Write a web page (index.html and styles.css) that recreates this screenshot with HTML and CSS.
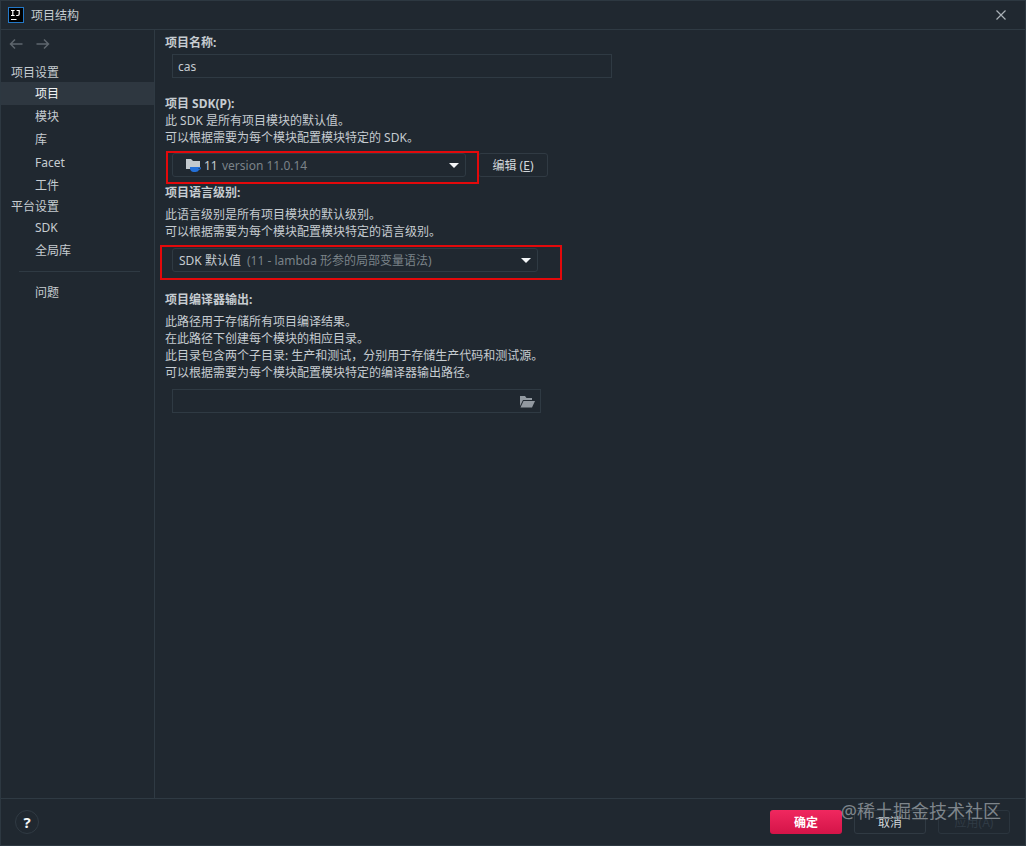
FILE: index.html
```html
<!DOCTYPE html>
<html lang="zh-CN">
<head>
<meta charset="utf-8">
<title>项目结构</title>
<link rel="stylesheet" href="styles.css">
</head>
<body>
<div class="window">
  <header class="titlebar">
    <svg class="app-icon" viewBox="0 0 16 16" aria-hidden="true">
      <rect x=".5" y=".5" width="15" height="15" fill="#000" stroke="#2378c8"/>
      <path d="M3 3.500h3.600M4.800 3.500v5M3 8.500h3.600M8.600 3.500h2.600v3.600q0 1.400-1.400 1.400H8.200M3 12.500h5.500" fill="none" stroke="#fff" stroke-width="1.200"/>
    </svg>
    <h1 class="title">项目结构</h1>
    <button class="close" type="button" aria-label="关闭">
      <svg viewBox="0 0 12 12"><path d="M1.500 1.500l9 9M10.500 1.500l-9 9" fill="none" stroke="#aab1b7" stroke-width="1.200"/></svg>
    </button>
  </header>

  <div class="body">
    <nav class="sidebar">
      <div class="history">
        <button type="button" aria-label="后退"><svg viewBox="0 0 14 12"><path d="M13.500 6H1.500M6 1.500L1.500 6 6 10.500" /></svg></button>
        <button type="button" aria-label="前进"><svg viewBox="0 0 14 12"><path d="M.5 6h12M8 1.500L12.500 6 8 10.500" /></svg></button>
      </div>
      <h2 class="group">项目设置</h2>
      <ul class="items">
        <li><a class="item selected" href="#" aria-current="page">项目</a></li>
        <li><a class="item" href="#">模块</a></li>
        <li><a class="item" href="#">库</a></li>
        <li><a class="item" href="#">Facet</a></li>
        <li><a class="item" href="#">工件</a></li>
      </ul>
      <h2 class="group">平台设置</h2>
      <ul class="items">
        <li><a class="item" href="#">SDK</a></li>
        <li><a class="item" href="#">全局库</a></li>
      </ul>
      <hr class="divider">
      <a class="item" href="#">问题</a>
    </nav>

    <main class="content">
      <section class="section">
        <label class="label" for="name">项目名称:</label>
        <input class="field name" id="name" type="text" value="cas">
      </section>

      <section class="section sdk">
        <label class="label" for="sdk">项目 SDK(P):</label>
        <p class="text">此 SDK 是所有项目模块的默认值。<br>可以根据需要为每个模块配置模块特定的 SDK。</p>
        <div class="row">
          <div class="combo sdk-combo">
            <select class="field" id="sdk"><option>11</option></select>
            <svg class="sdk-icon" viewBox="0 0 16 16" aria-hidden="true">
              <path d="M1 2h5l2 2h7v8H1z" fill="#c3c9ce"/>
              <path d="M5 10h9.500q1.500 0 1.500 1.300T14 13q-1 2-3.500 2h-2Q6 15 5 12z" fill="#2470d8"/>
              <path d="M13.500 11.200h1.300v.8h-1.300z" fill="#202830"/>
            </svg>
            <span class="hint">version 11.0.14</span>
            <svg class="arrow" viewBox="0 0 10 5" aria-hidden="true"><path d="M0 0h10L5 5z" fill="#f4f6f8"/></svg>
            <span class="mark"></span>
          </div>
          <button class="button edit" type="button">编辑 (<u>E</u>)</button>
        </div>
      </section>

      <section class="section level">
        <label class="label" for="level">项目语言级别:</label>
        <p class="text">此语言级别是所有项目模块的默认级别。<br>可以根据需要为每个模块配置模块特定的语言级别。</p>
        <div class="combo level-combo">
          <select class="field" id="level"><option>SDK 默认值</option></select>
          <span class="hint">(11 - lambda 形参的局部变量语法)</span>
          <svg class="arrow" viewBox="0 0 10 5" aria-hidden="true"><path d="M0 0h10L5 5z" fill="#f4f6f8"/></svg>
          <span class="mark"></span>
        </div>
      </section>

      <section class="section output">
        <label class="label" for="output">项目编译器输出:</label>
        <p class="text">此路径用于存储所有项目编译结果。<br>在此路径下创建每个模块的相应目录。<br>此目录包含两个子目录: 生产和测试，分别用于存储生产代码和测试源。<br>可以根据需要为每个模块配置模块特定的编译器输出路径。</p>
        <div class="path">
          <input class="field" id="output" type="text">
          <button class="browse" type="button" aria-label="浏览">
            <svg viewBox="0 0 16 14"><path d="M1 11V1h5l1.500 2H13v2H4z" fill="#9299a0"/><path d="M4.500 6H16l-3 6.500H1.500z" fill="#9299a0"/></svg>
          </button>
        </div>
      </section>
    </main>
  </div>

  <footer class="footer">
    <button class="help" type="button" aria-label="帮助">?</button>
    <div class="actions">
      <button class="button primary" type="button">确定</button>
      <button class="button" type="button">取消</button>
      <button class="button" type="button" disabled>应用(A)</button>
    </div>
    <span class="watermark">@稀土掘金技术社区</span>
  </footer>
</div>
</body>
</html>
```

FILE: styles.css
```css
* {
  box-sizing: border-box;
}

body {
  margin: 0;
  background: #202830;
  color: #c6ccd1;
  font: 12px/17px "Noto Sans", "Noto Sans CJK SC", sans-serif;
}

button,
input,
select {
  margin: 0;
  color: inherit;
  font: inherit;
}

button {
  padding: 0;
  border: 0;
  background: none;
}

svg {
  display: block;
}

.window {
  display: flex;
  flex-direction: column;
  min-height: 100vh;
  border: 1px solid #2d3841;
}

.titlebar {
  display: flex;
  align-items: center;
  gap: 7px;
  height: 29px;
  padding: 0 18px 0 7px;
  border-bottom: 1px solid #2f3a43;
}

.app-icon {
  width: 16px;
  height: 16px;
}

.title {
  margin: 0;
  font-size: 12px;
  font-weight: 400;
}

.close {
  margin-left: auto;
}

.close svg {
  width: 12px;
  height: 12px;
}

.body {
  display: flex;
  flex: 1;
}

.sidebar {
  flex: none;
  width: 154px;
  border-right: 1px solid #2f3a43;
}

.history {
  display: flex;
  gap: 13px;
  height: 33px;
  padding: 8px 8px 0;
}

.history svg {
  width: 14px;
  height: 12px;
  fill: none;
  stroke: #5e666d;
  stroke-width: 1.5;
}

.history button {
  height: 12px;
}

.group {
  margin: 0;
  padding-left: 10px;
  font-size: 12px;
  font-weight: 400;
  line-height: 19px;
}

.items {
  margin: 0;
  padding: 0;
  list-style: none;
}

.item {
  display: block;
  padding-left: 34px;
  color: inherit;
  line-height: 23px;
  text-decoration: none;
}

.selected {
  background: #2e3740;
  color: #f1f3f5;
}

.divider {
  margin: 9px 14px 9px 18px;
  border: 0;
  border-top: 1px solid #2f3a43;
}

.content {
  flex: 1;
  padding: 4px 10px 16px;
}

.section {
  display: flex;
  flex-direction: column;
  align-items: flex-start;
}

.sdk {
  margin-top: 17px;
}

.level {
  margin-top: 7px;
}

.output {
  margin-top: 19px;
}

.label {
  font-weight: 700;
}

.text {
  margin: 0;
}

.level .text,
.output .text {
  margin-top: 5px;
}

.field {
  width: 100%;
  height: 24px;
  padding: 0 6px;
  border: 1px solid #2f3a43;
  border-radius: 0;
  background: #202830;
  outline: 0;
  appearance: none;
}

.name {
  max-width: 440px;
  margin: 3px 0 0 7px;
  padding-left: 5px;
}

.row {
  display: flex;
  gap: 12px;
  margin-top: 7px;
}

.combo {
  position: relative;
  display: grid;
  grid-template-columns: auto 1fr auto;
  align-items: center;
  margin-left: 7px;
}

.combo .field {
  grid-area: 1 / 1 / 2 / 4;
  border-radius: 3px;
}

.row .combo {
  width: 294px;
}

.sdk-combo .field {
  padding-left: 31px;
}

.level-combo {
  width: 366px;
  margin-top: 8px;
}

.sdk-icon,
.hint,
.arrow {
  z-index: 1;
  grid-row: 1;
  pointer-events: none;
}

.sdk-icon {
  grid-column: 1;
  width: 16px;
  height: 16px;
  margin-left: 13px;
}

.hint {
  grid-column: 2;
  color: #7b8389;
}

.sdk-combo .hint {
  padding-left: 21px;
}

.level-combo .hint {
  padding-left: 75px;
}

.arrow {
  grid-column: 3;
  width: 10px;
  height: 5px;
  margin-right: 7px;
}

.mark {
  position: absolute;
  z-index: 2;
  border: 2px solid #e3090b;
  pointer-events: none;
}

.sdk-combo .mark {
  inset: -2px -13px -7px -6px;
}

.level-combo .mark {
  inset: -3px -24px -8px -12px;
}

.button {
  height: 24px;
  min-width: 72px;
  border: 1px solid #303a43;
  border-radius: 3px;
  color: #d2d7db;
}

.edit {
  min-width: 70px;
}

.path {
  position: relative;
  width: 100%;
  max-width: 369px;
  margin: 8px 0 0 7px;
}

.path .field {
  display: block;
  padding-right: 26px;
}

.browse {
  position: absolute;
  top: 6px;
  right: 6px;
}

.browse svg {
  width: 16px;
  height: 14px;
}

.footer {
  position: relative;
  display: flex;
  align-items: center;
  justify-content: space-between;
  height: 47px;
  padding: 0 15px 0 14px;
  border-top: 1px solid #2f3a43;
}

.help {
  width: 24px;
  height: 24px;
  border: 1px solid #303a43;
  border-radius: 50%;
  color: #f4f6f8;
  font-size: 15px;
  font-weight: 700;
}

.actions {
  display: flex;
  gap: 12px;
}

.primary {
  border: 0;
  background: linear-gradient(#f0285f, #d41448);
  color: #fff;
  font-weight: 700;
}

.button:disabled {
  border-color: #2b353e;
  color: #303b45;
}

.watermark {
  position: absolute;
  top: 0;
  right: 24px;
  color: #7e858b;
  font-size: 18px;
  line-height: 24px;
  pointer-events: none;
}
```
